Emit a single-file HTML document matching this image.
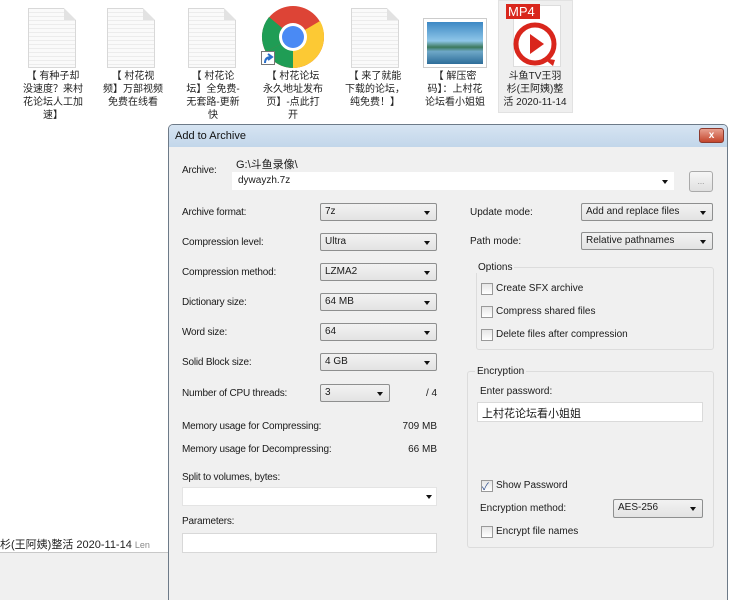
<!DOCTYPE html>
<html><head><meta charset="utf-8"><style>
*{margin:0;padding:0;box-sizing:border-box}
body{width:732px;height:600px;position:relative;overflow:hidden;background:#fff;font-family:"Liberation Sans","Noto Sans CJK SC",sans-serif;font-size:10px;color:#1a1a1a}
.a{position:absolute}
.ic{position:absolute;top:70px;width:76px;text-align:center;font-size:10px;line-height:13px;color:#222}
.doc{position:absolute;top:8px;width:48px;height:60px;background:repeating-linear-gradient(#fafafa 0 3px,#ececec 3px 4px);border:1px solid #d8d8d8}
.doc:after{content:"";position:absolute;right:-1px;top:-1px;border-style:solid;border-width:0 12px 12px 0;border-color:#fff #fff #e2e2e2 #e2e2e2}
.lbl{position:absolute;left:182px;font-size:10px;letter-spacing:-.2px}
.sel{position:absolute;height:18px;border:1px solid #8e8f8f;border-radius:2px;background:linear-gradient(#f2f2f2,#e3e3e3);padding:0 4px;line-height:16px;font-size:10px}
.sel:after{content:"";position:absolute;right:6px;top:7px;border-style:solid;border-width:4px 3px 0 3px;border-color:#111 transparent transparent}
.inp{position:absolute;background:#fff;border:1px solid #dadada;padding:2px 5px}
.cb{position:absolute;left:481px;width:12px;height:12px;border:1px solid #999;background:linear-gradient(#e6e6e6,#fff)}
.cbl{position:absolute;left:496px;font-size:10px}
.grp{position:absolute;border:1px solid #dcdcdc;border-radius:3px}
</style></head><body>
<div class="a" style="left:498px;top:0;width:75px;height:113px;background:#efefef;border:1px solid #e2e2e2"></div>
<div class="doc" style="left:28px"></div>
<div class="doc" style="left:107px"></div>
<div class="doc" style="left:188px"></div>
<div class="doc" style="left:351px"></div>
<svg class="a" style="left:261px;top:5px" width="64" height="64" viewBox="0 0 64 64">
<circle cx="32" cy="32" r="31" fill="#dd4436"/>
<path d="M32 32 L5 47 A31 31 0 0 0 32 63 Z" fill="#1f9d55"/>
<path d="M32 32 L5 47 A31 31 0 0 1 8 12 Z" fill="#1f9d55"/>
<path d="M32 32 L63 32 A31 31 0 0 1 32 63 Z" fill="#fcc934"/>
<path d="M32 32 L59 16 A31 31 0 0 1 63 32 Z" fill="#fcc934"/>
<circle cx="32" cy="32" r="14" fill="#fff"/><circle cx="32" cy="32" r="11" fill="#4a8af4"/>
</svg>
<div class="a" style="left:261px;top:51px;width:14px;height:14px;background:#fff;border:1px solid #777"><svg width="12" height="12"><path d="M3 11 Q3 5 9 5 M6 2 L10 5 L6 8" stroke="#2a6fc9" stroke-width="2" fill="none"/></svg></div>
<div class="a" style="left:423px;top:18px;width:64px;height:50px;background:#fff;border:1px solid #ccc;padding:3px"><div style="width:100%;height:100%;background:linear-gradient(#3c88c4,#8ec6e8 45%,#3d7a5c 60%,#6fa8c8 70%,#2d6d99)"></div></div>
<div class="a" style="left:513px;top:5px;width:48px;height:62px;background:#fff;border:1px solid #ddd"></div>
<div class="a" style="left:506px;top:4px;width:34px;height:15px;background:#d9261c;color:#fff;font-size:13px;line-height:15px;padding-left:2px">MP4</div>
<svg class="a" style="left:513px;top:22px" width="46" height="46"><circle cx="22" cy="22" r="19" fill="none" stroke="#d9261c" stroke-width="5"/><path d="M17 12 L31 22 L17 32Z" fill="#d9261c"/><path d="M30 36 L40 44 L42 38Z" fill="#d9261c"/></svg>
<div class="ic" style="left:15px">【 有种子却<br>没速度？来村<br>花论坛人工加<br>速】</div>
<div class="ic" style="left:95px">【 村花视<br>频】万部视频<br>免费在线看</div>
<div class="ic" style="left:175px">【 村花论<br>坛】全免费-<br>无套路-更新<br>快</div>
<div class="ic" style="left:255px">【 村花论坛<br>永久地址发布<br>页】-点此打<br>开</div>
<div class="ic" style="left:337px">【 来了就能<br>下载的论坛，<br>纯免费！】</div>
<div class="ic" style="left:417px">【 解压密<br>码】：上村花<br>论坛看小姐姐</div>
<div class="ic" style="left:497px">斗鱼TV王羽<br>杉(王阿姨)整<br>活 2020-11-14</div>
<div class="a" style="left:0;top:530px;width:170px;height:24px;font-size:11px;line-height:30px;color:#222;white-space:nowrap">杉(王阿姨)整活 2020-11-14 <span style="color:#888;font-size:9px">Len</span></div>
<div class="a" style="left:0;top:552px;width:170px;height:48px;background:#f0f0f0;border-top:1px solid #c8c8c8"></div>
<div class="a" style="left:168px;top:124px;width:560px;height:476px;background:#f0f0f0;border:1px solid #6d7a88;border-bottom:none;border-radius:5px 5px 0 0"></div>
<div class="a" style="left:169px;top:125px;width:558px;height:22px;background:linear-gradient(#d6e4f2,#c2d6ea);border-radius:4px 4px 0 0;font-size:11px;line-height:22px;padding-left:6px;color:#111">Add to Archive</div>
<div class="a" style="left:699px;top:128px;width:25px;height:15px;background:linear-gradient(#e8a090,#c4452c);border:1px solid #8c3a2e;border-radius:3px;color:#fff;font-size:10px;font-weight:bold;text-align:center;line-height:13px">x</div>
<div class="a" style="left:170px;top:147px;width:556px;height:453px;background:#f0f0f0"></div>

<div class="lbl" style="top:165px">Archive:</div>
<div class="a" style="left:236px;top:156px;font-size:11px">G:\斗鱼录像\</div>
<div class="inp" style="left:232px;top:172px;width:442px;height:18px;border-color:#fff">dywayzh.7z</div>
<div class="a" style="left:662px;top:180px;border-style:solid;border-width:4px 3px 0 3px;border-color:#111 transparent transparent"></div>
<div class="a" style="left:689px;top:171px;width:24px;height:21px;border:1px solid #aaa;border-radius:3px;background:linear-gradient(#f6f6f6,#e0e0e0);font-size:8px;text-align:center;line-height:20px;color:#888">...</div>

<div class="lbl" style="top:207px">Archive format:</div>
<div class="lbl" style="top:237px">Compression level:</div>
<div class="lbl" style="top:267px">Compression method:</div>
<div class="lbl" style="top:297px">Dictionary size:</div>
<div class="lbl" style="top:327px">Word size:</div>
<div class="lbl" style="top:357px">Solid Block size:</div>
<div class="lbl" style="top:388px">Number of CPU threads:</div>
<div class="lbl" style="top:421px">Memory usage for Compressing:</div>
<div class="lbl" style="top:444px">Memory usage for Decompressing:</div>
<div class="lbl" style="top:472px">Split to volumes, bytes:</div>
<div class="lbl" style="top:516px">Parameters:</div>
<div class="sel" style="left:320px;top:203px;width:117px">7z</div>
<div class="sel" style="left:320px;top:233px;width:117px">Ultra</div>
<div class="sel" style="left:320px;top:263px;width:117px">LZMA2</div>
<div class="sel" style="left:320px;top:293px;width:117px">64 MB</div>
<div class="sel" style="left:320px;top:323px;width:117px">64</div>
<div class="sel" style="left:320px;top:353px;width:117px">4 GB</div>
<div class="sel" style="left:320px;top:384px;width:70px">3</div>
<div class="a" style="left:426px;top:388px">/ 4</div>
<div class="a" style="left:390px;top:421px;width:47px;text-align:right">709 MB</div>
<div class="a" style="left:390px;top:444px;width:47px;text-align:right">66 MB</div>
<div class="inp" style="left:182px;top:487px;width:255px;height:19px;border-color:#e4e4e4"></div>
<div class="a" style="left:426px;top:495px;border-style:solid;border-width:4px 3px 0 3px;border-color:#111 transparent transparent"></div>
<div class="inp" style="left:182px;top:533px;width:255px;height:20px;border-color:#d8d8d8"></div>

<div class="a" style="left:470px;top:207px">Update mode:</div>
<div class="a" style="left:470px;top:236px">Path mode:</div>
<div class="sel" style="left:581px;top:203px;width:132px">Add and replace files</div>
<div class="sel" style="left:581px;top:232px;width:132px">Relative pathnames</div>

<div class="grp" style="left:476px;top:267px;width:238px;height:83px"></div>
<div class="a" style="left:476px;top:262px;background:#f0f0f0;padding:0 2px">Options</div>
<div class="cb" style="top:283px"></div><div class="cbl" style="top:283px">Create SFX archive</div>
<div class="cb" style="top:306px"></div><div class="cbl" style="top:306px">Compress shared files</div>
<div class="cb" style="top:329px"></div><div class="cbl" style="top:329px">Delete files after compression</div>

<div class="grp" style="left:467px;top:371px;width:247px;height:177px"></div>
<div class="a" style="left:475px;top:366px;background:#f0f0f0;padding:0 2px">Encryption</div>
<div class="a" style="left:480px;top:386px">Enter password:</div>
<div class="inp" style="left:477px;top:402px;width:226px;height:20px;font-size:11px;padding:2px 4px">上村花论坛看小姐姐</div>
<div class="cb" style="top:480px"></div><div class="a" style="left:482px;top:478px;font-size:10px;color:#2a4a8a">✓</div><div class="cbl" style="top:480px">Show Password</div>
<div class="a" style="left:480px;top:503px">Encryption method:</div>
<div class="sel" style="left:613px;top:499px;width:90px;height:19px">AES-256</div>
<div class="cb" style="top:526px"></div><div class="cbl" style="top:526px">Encrypt file names</div>
</body></html>
